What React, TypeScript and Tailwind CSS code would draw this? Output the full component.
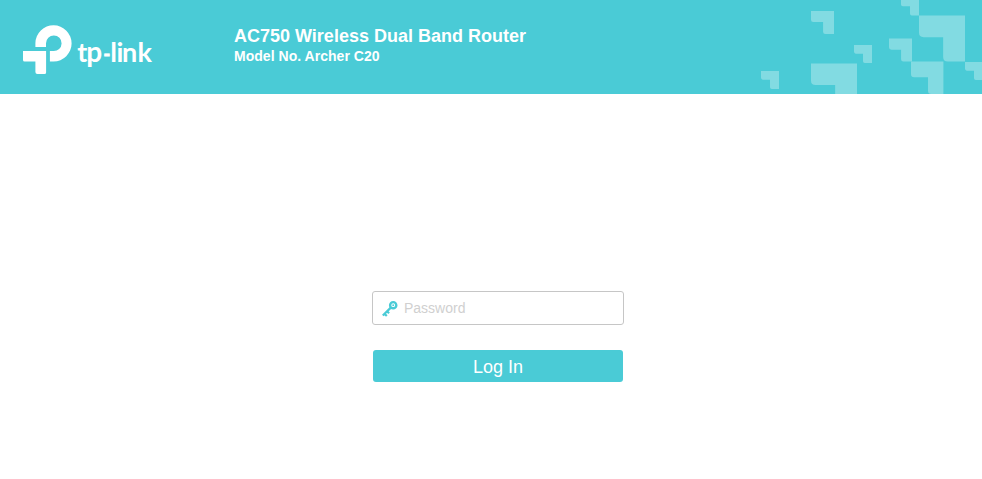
type Block = { x: number; y: number; s: number };

const blocks: Block[] = [
  { x: 811, y: 11, s: 23 },
  { x: 854, y: 45, s: 18 },
  { x: 761, y: 71, s: 18 },
  { x: 811, y: 63.4, s: 46 },
  { x: 901, y: -2.4, s: 18 },
  { x: 919, y: 15.6, s: 46 },
  { x: 889, y: 38.6, s: 23 },
  { x: 911, y: 61.6, s: 32.4 },
  { x: 965, y: 62, s: 18 },
];

function cornerPath({ x, y, s }: Block) {
  const r = s * 0.1;
  const ny = y + s * (s < 40 ? 0.48 : 0.47);
  const nx = x + s * (s < 20 ? 0.5 : 0.525);
  return `M${x} ${y}H${x + s}V${y + s}H${nx + r}Q${nx} ${y + s} ${nx} ${y + s - r}V${ny}H${x + r}Q${x} ${ny} ${x} ${ny - r}Z`;
}

function Pattern() {
  return (
    <svg className="absolute right-0 top-0" width="232" height="94" viewBox="750 0 232 94" fill="#82dbe2" aria-hidden="true">
      {blocks.map((b) => (
        <path key={`${b.x}-${b.y}`} d={cornerPath(b)} />
      ))}
    </svg>
  );
}

function Logo() {
  return (
    <div className="flex h-[50px] w-[211px] text-white">
      <svg width="54" height="50" viewBox="23 25 54 50" fill="currentColor" aria-hidden="true">
        <path d="M35.4 47V43.2A18.1 18.1 0 1 1 53.5 61.5H49.9V51H53.5A7.8 7.8 0 1 0 46 43.2V47Z" />
        <path d="M23 51H46.1V72.4Q46.1 74 44.5 74H37.4Q35.4 74 35.4 72V61.5H24.6Q23 61.5 23 59.9Z" />
      </svg>
      <svg width="78" height="50" viewBox="77 25 78 50" fill="currentColor" className="font-['Lato',sans-serif] text-[27px] font-bold">
        <text y="61.8">
          <tspan x="77.3">t</tspan>
          <tspan x="86.2" className="text-[28px]">p</tspan>
          <tspan x="103.4" y="60.6" className="text-[18px] font-black" stroke="currentColor" strokeWidth="0.8">-</tspan>
          <tspan x="110.2 116.4 121.9 137.6" y="61.8">link</tspan>
        </text>
      </svg>
    </div>
  );
}

function KeyIcon() {
  return (
    <svg className="shrink-0" width="16" height="17" viewBox="0 0 16 17" fill="none" stroke="#4acbd6" aria-hidden="true">
      <circle cx="11.2" cy="5.2" r="3.1" strokeWidth="2.4" />
      <circle cx="11.2" cy="5.2" r="0.9" fill="#4acbd6" stroke="none" />
      <path d="M8.8 7.6L0.8 15.5M2.5 13.7L4.8 16M5 11.2L7.1 13.3" strokeWidth="2.2" />
    </svg>
  );
}

export default function App() {
  return (
    <div className="min-h-[479px] bg-white font-['Liberation_Sans',Arial,sans-serif]">
      <header className="relative flex h-[94px] items-start overflow-hidden bg-[#4acbd6] pl-[23px] pt-[25px]">
        <Pattern />
        <Logo />
        <div className="font-bold text-white">
          <h1 className="text-[18px] leading-[22px]">AC750 Wireless Dual Band Router</h1>
          <p className="text-[14px] leading-[18px] tracking-[0.03px]">Model No. Archer C20</p>
        </div>
      </header>
      <form className="ml-[372px] mt-[197px] w-[252px]" onSubmit={(e) => e.preventDefault()}>
        <label className="flex h-[34px] items-center gap-[6px] rounded-[3px] border border-[#c6c6c6] pl-[9px]">
          <KeyIcon />
          <input
            type="password"
            placeholder="Password"
            className="h-full min-w-0 flex-1 bg-transparent text-[14px] outline-none placeholder:text-[#d0d0d0]"
          />
        </label>
        <button type="submit" className="mx-px mt-[25px] block h-8 w-[250px] rounded-[3px] bg-[#4acbd6] pt-px text-[18px] leading-8 text-white">
          Log In
        </button>
      </form>
    </div>
  );
}
